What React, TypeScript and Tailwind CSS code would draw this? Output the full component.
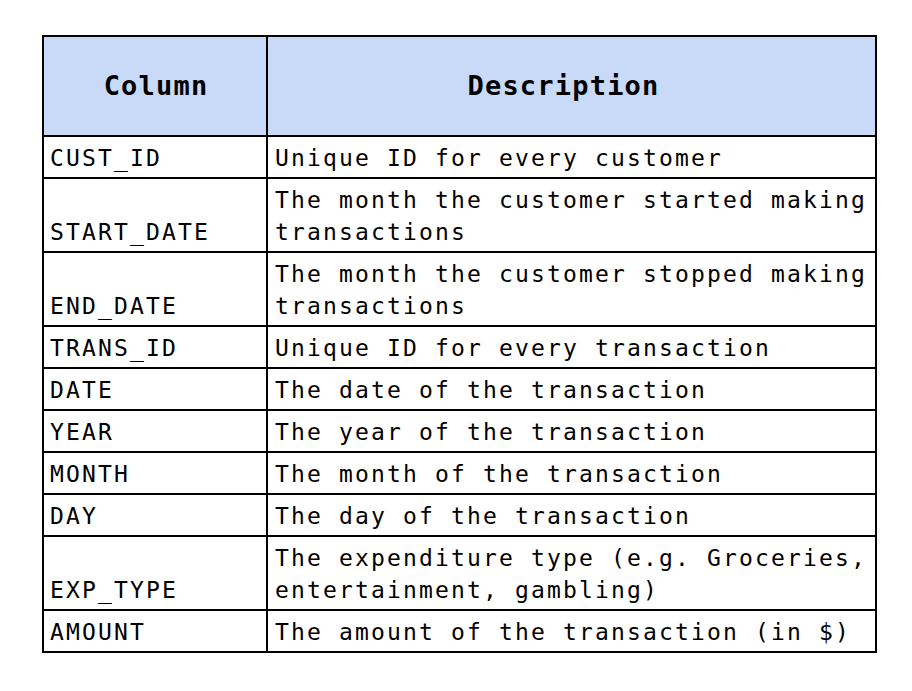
import React from "react";

const rows: { col: string; desc: string[] }[] = [
  { col: "CUST_ID", desc: ["Unique ID for every customer"] },
  { col: "START_DATE", desc: ["The month the customer started making", "transactions"] },
  { col: "END_DATE", desc: ["The month the customer stopped making", "transactions"] },
  { col: "TRANS_ID", desc: ["Unique ID for every transaction"] },
  { col: "DATE", desc: ["The date of the transaction"] },
  { col: "YEAR", desc: ["The year of the transaction"] },
  { col: "MONTH", desc: ["The month of the transaction"] },
  { col: "DAY", desc: ["The day of the transaction"] },
  { col: "EXP_TYPE", desc: ["The expenditure type (e.g. Groceries,", "entertainment, gambling)"] },
  { col: "AMOUNT", desc: ["The amount of the transaction (in $)"] },
];

export default function App() {
  return (
    <div className="w-[912px] h-[691px] bg-white pt-[35px] pl-[42px] text-black [font-family:'DejaVu_Sans_Mono',monospace]">
      <table className="w-[835px] border-collapse border-2 border-black table-fixed">
        <colgroup>
          <col className="w-[224px]" />
          <col />
        </colgroup>
        <thead>
          <tr className="bg-[#c9daf8]">
            <th className="border-2 border-black h-[100px] p-0 pl-[2px] text-center align-middle text-[27px] font-bold tracking-[1.2px] leading-[40px]">
              Column
            </th>
            <th className="border-2 border-black h-[100px] p-0 pr-[16px] text-center align-middle text-[27px] font-bold tracking-[1.2px] leading-[40px]">
              Description
            </th>
          </tr>
        </thead>
        <tbody>
          {rows.map((r) => (
            <tr key={r.col}>
              <td className="border-2 border-black pl-[6px] pr-[4px] pt-[5px] pb-[3px] align-bottom text-[23px] leading-[32px] tracking-[2.15px] whitespace-nowrap">
                {r.col}
              </td>
              <td className="border-2 border-black pl-[7px] pr-[4px] pt-[5px] pb-[3px] align-bottom text-[23px] leading-[32px] tracking-[2.15px] whitespace-nowrap">
                {r.desc.map((l, i) => (
                  <div key={i}>{l}</div>
                ))}
              </td>
            </tr>
          ))}
        </tbody>
      </table>
    </div>
  );
}
